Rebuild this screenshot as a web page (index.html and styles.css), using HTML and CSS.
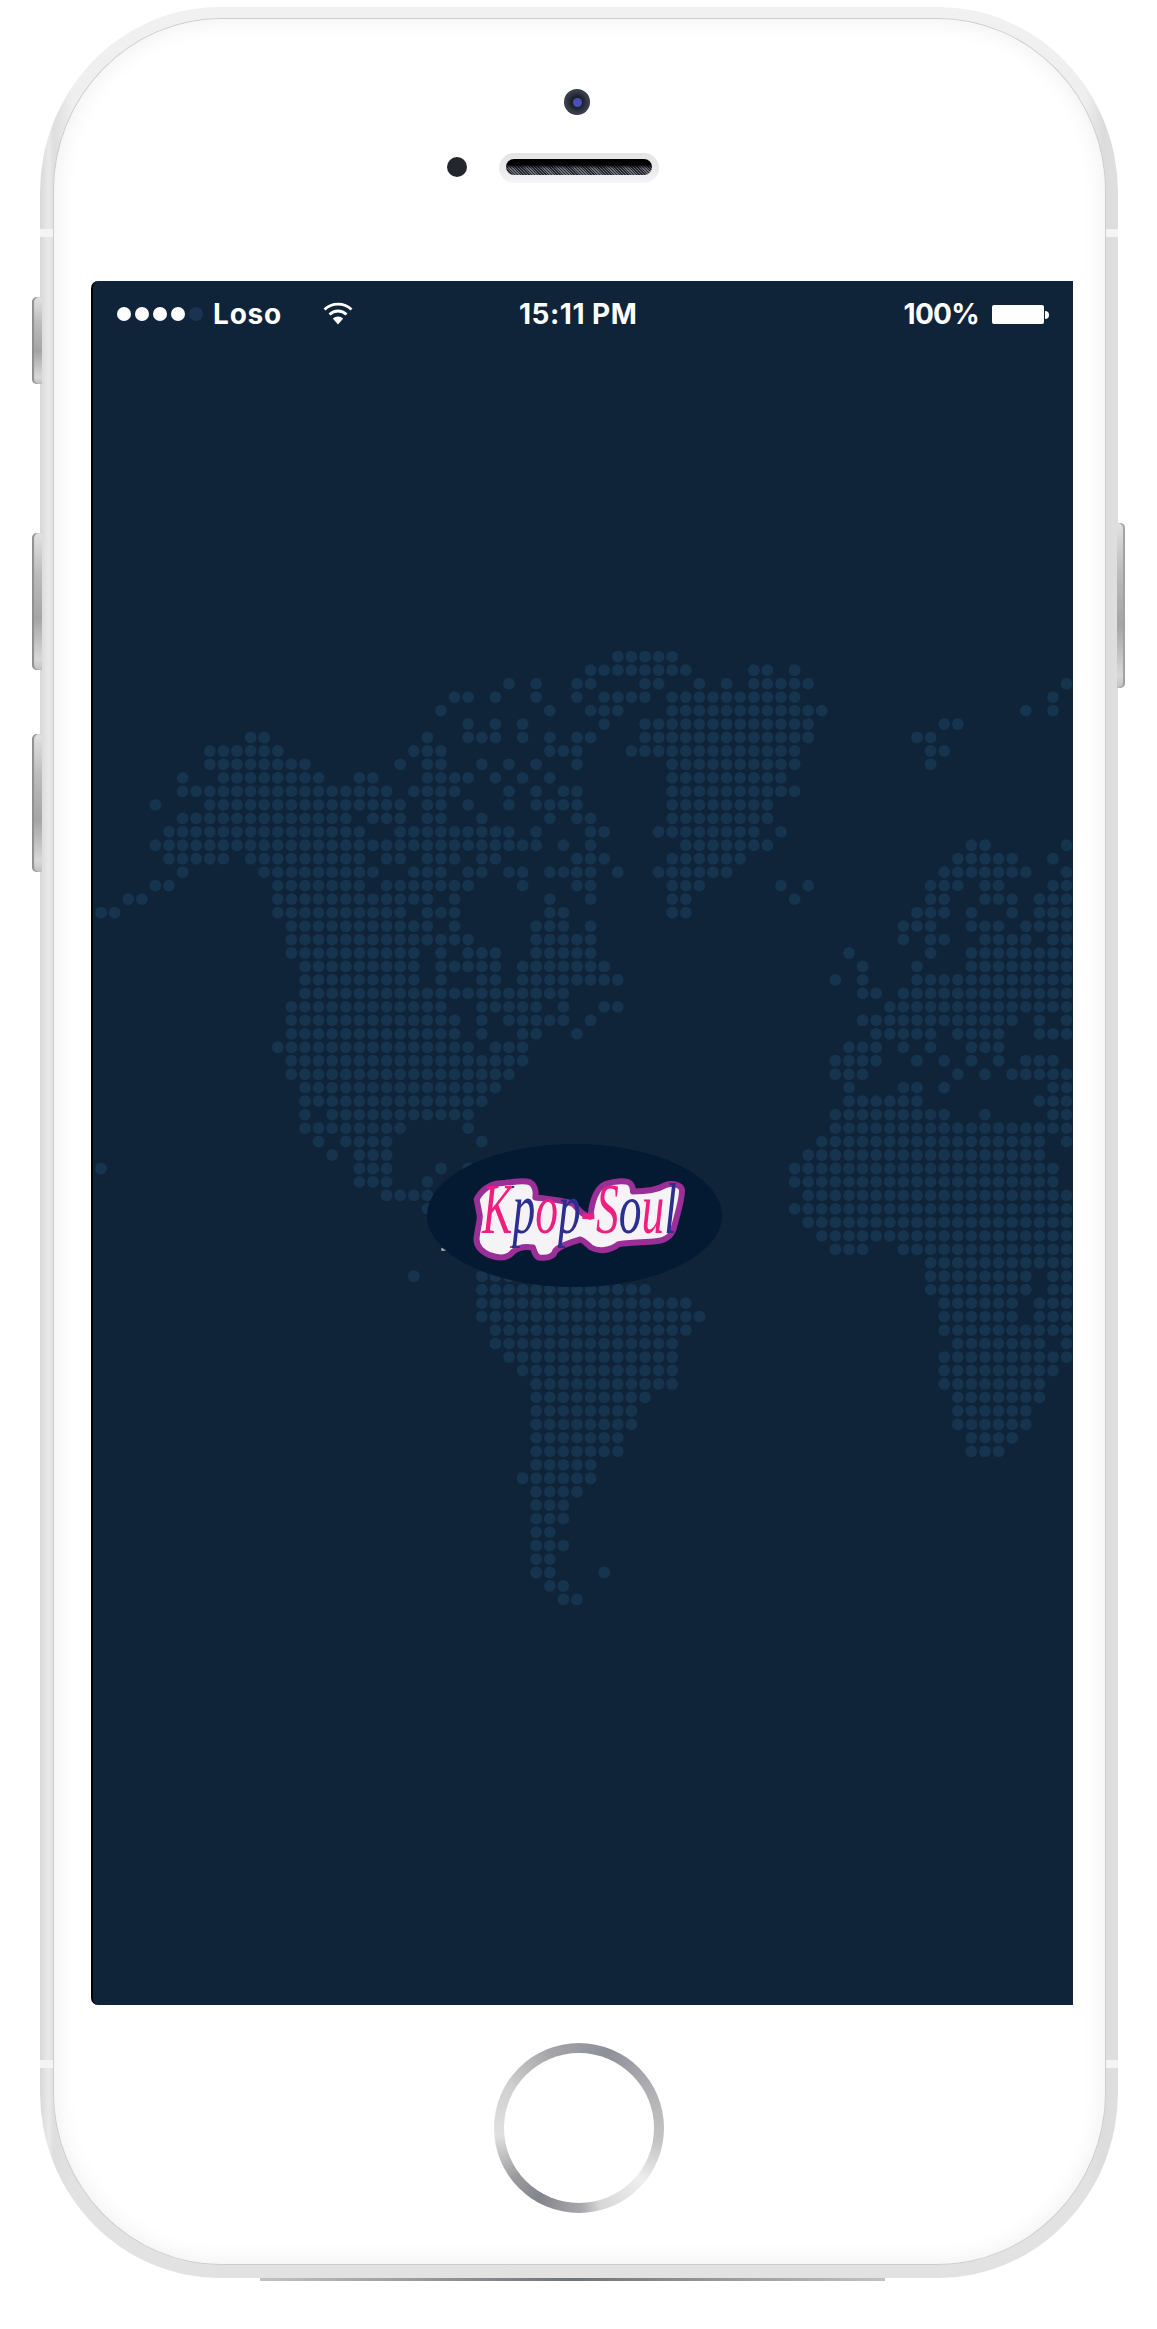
FILE: index.html
```html
<!DOCTYPE html>
<html lang="en">
<head>
    <meta charset="UTF-8">
    <meta name="viewport" content="width=device-width, initial-scale=1.0">
    <title>Kpop-Soul</title>
    <link rel="stylesheet" href="styles.css">
</head>
<body>

<div class="phone">
    <span class="side-btn side-btn-mute"></span>
    <span class="side-btn side-btn-up"></span>
    <span class="side-btn side-btn-down"></span>
    <span class="side-btn side-btn-power"></span>
    <span class="band band-top-left"></span>
    <span class="band band-top-right"></span>
    <span class="band band-bottom-left"></span>
    <span class="band band-bottom-right"></span>

    <div class="bezel">
        <div class="sensors">
            <div class="camera"><span class="lens"></span></div>
            <div class="earpiece-row">
                <span class="prox"></span>
                <div class="speaker"><span class="grille"></span></div>
            </div>
        </div>

        <div class="screen">
            <!-- dots get added by map.js -->
            <svg id="world-map" class="world-map" width="980" height="1724"></svg>

            <div class="status-bar">
                <div class="status-left">
                    <span class="signal">
                        <i></i><i></i><i></i><i></i><i class="off"></i>
                    </span>
                    <span class="carrier">Loso</span>
                    <svg class="wifi" width="30" height="24" viewBox="0 0 30 24">
                        <path class="wifi-arc" d="M1.5 8.5C9 1.2 21 1.2 28.5 8.5"/>
                        <path class="wifi-arc" d="M6.5 13.5C11.5 8.8 18.5 8.8 23.5 13.5"/>
                        <path class="wifi-dot" d="M9.8 17.6C13 14.9 17 14.9 20.2 17.6L15 23.5Z"/>
                    </svg>
                </div>
                <span class="clock">15:11 PM</span>
                <div class="status-right">
                    <span class="percent">100%</span>
                    <span class="battery"></span>
                </div>
            </div>

            <div class="logo-oval">
                <svg class="logo" width="295" height="143" viewBox="80 72 885 428">
                    <defs>
                        <!-- hard stops, one colour per letter -->
                        <linearGradient id="logo-ink" gradientUnits="userSpaceOnUse" x1="0" y1="0" x2="920" y2="0">
                            <stop offset="0.156" stop-color="#ee1f7e"/>
                            <stop offset="0.156" stop-color="#2c2f8f"/>
                            <stop offset="0.273" stop-color="#2c2f8f"/>
                            <stop offset="0.273" stop-color="#ee1f7e"/>
                            <stop offset="0.39" stop-color="#ee1f7e"/>
                            <stop offset="0.39" stop-color="#2c2f8f"/>
                            <stop offset="0.507" stop-color="#2c2f8f"/>
                            <stop offset="0.507" stop-color="#ee1f7e"/>
                            <stop offset="0.702" stop-color="#ee1f7e"/>
                            <stop offset="0.702" stop-color="#2c2f8f"/>
                            <stop offset="0.819" stop-color="#2c2f8f"/>
                            <stop offset="0.819" stop-color="#ee1f7e"/>
                            <stop offset="0.935" stop-color="#ee1f7e"/>
                            <stop offset="0.935" stop-color="#2c2f8f"/>
                        </linearGradient>
                    </defs>
                    <path class="logo-sticker" d="M229 238C240 212 270 190 300 189C330 188 365 178 388 186C404 194 408 215 405 232C440 236 490 240 520 252C535 268 545 285 570 290C574 250 585 205 615 192C645 182 680 180 690 190C698 198 698 208 698 214C725 214 770 210 795 195C815 188 843 192 845 210C846 240 830 285 820 325C812 350 795 362 760 364C725 366 690 366 655 372C630 392 595 395 572 382C560 372 552 362 540 358C515 365 480 375 465 392C460 412 440 415 415 412C402 405 402 392 398 382C375 378 355 380 338 395C322 415 295 415 268 405C245 395 225 380 229 350C232 325 240 300 238 285Z"/>
                    <path class="logo-speck" d="M123 384h6v4h6v4h-12z"/>
                    <text class="logo-type" transform="translate(245 338) scale(0.636 1)">Kpop-Soul</text>
                </svg>
            </div>
        </div>

        <div class="home-btn"><span class="home-face"></span></div>
    </div>
</div>

<script src="map.js"></script>

</body>
</html>
```

FILE: styles.css
```css
html, body {
    margin: 0;
    padding: 0;
    background: #fff;
}
body {
    width: 1157px;
    height: 2329px;
    overflow: hidden;
    font-family: Inter, "Liberation Sans", sans-serif;
}

/* device */
.phone {
    position: relative;
    box-sizing: border-box;
    width: 1078px;
    height: 2271px;
    margin: 7px 0 0 40px;
    padding: 12px 13px 14px 14px;
    border-radius: 180px / 186px;
    background:
        linear-gradient(90deg, #d8d8d8 0, #e9e9e9 0.8%, #dedede 1.3%, rgba(230, 230, 230, 0) 3%, rgba(230, 230, 230, 0) 97%, #dcdcdc 98.6%, #dfdfdf 100%),
        linear-gradient(180deg, #f1f1f1 0, #e9e9e9 12%, #e2e2e2 100%);
}
.phone::after {
    content: "";
    position: absolute;
    left: 220px;
    right: 233px;
    bottom: -3px;
    height: 3px;
    background: linear-gradient(90deg, #c0c3c6, #6f7478 50%, #c0c3c6);
}
.side-btn {
    position: absolute;
    width: 10px;
    background: linear-gradient(180deg, #e2e2e2 0, #bcbcbc 30%, #a5a5a5 62%, #d8d8d8 92%, #c2c2c2 100%);
}
.side-btn-mute, .side-btn-up, .side-btn-down {
    left: -8px;
    border-radius: 5px 0 0 5px;
    box-shadow: inset 2px 0 1px #8f8f8f;
}
.side-btn-mute { top: 290px; height: 87px; }
.side-btn-up { top: 526px; height: 137px; }
.side-btn-down { top: 727px; height: 138px; }
.side-btn-power {
    top: 516px;
    right: -7px;
    width: 8px;
    height: 165px;
    border-radius: 0 5px 5px 0;
    box-shadow: inset -2px 0 1px #a0a0a0;
}
.band {
    position: absolute;
    width: 14px;
    height: 8px;
    background: #f4f4f4;
}
.band-top-left { top: 222px; left: 0; }
.band-top-right { top: 222px; right: 0; }
.band-bottom-left { top: 2053px; left: 0; }
.band-bottom-right { top: 2053px; right: 0; }

.bezel {
    position: relative;
    height: 100%;
    border-radius: 168px / 172px;
    background: #fff;
    box-shadow: 0 0 0 1px #cdcdcd, inset 0 0 24px #eeeeee;
}

/* top of the device */
.sensors {
    box-sizing: border-box;
    height: 262px;
    padding-top: 70px;
}
.camera {
    display: flex;
    align-items: center;
    justify-content: center;
    width: 26px;
    height: 26px;
    margin-left: 510px;
    border-radius: 50%;
    background: radial-gradient(circle, #1c2130 30%, #3b3f4a 62%, #1b1d24 100%);
}
.lens {
    width: 9px;
    height: 9px;
    border-radius: 50%;
    background: #4b50b4;
}
.earpiece-row {
    display: flex;
    align-items: center;
    gap: 32px;
    margin: 38px 0 0 393px;
}
.prox {
    width: 20px;
    height: 20px;
    margin-top: -2px;
    border-radius: 50%;
    background: #24262e;
}
.speaker {
    box-sizing: border-box;
    width: 160px;
    height: 30px;
    padding: 6px 7px;
    border-radius: 15px;
    background: linear-gradient(180deg, #e4e4e6 0, #ebebed 60%, #f6f6f8 100%);
}
.grille {
    display: block;
    height: 16px;
    border-radius: 8px;
    background:
        linear-gradient(180deg, #000 0, #000 35%, rgba(0, 0, 0, 0) 60%),
        repeating-linear-gradient(45deg, #25252c 0, #25252c 1px, #70707c 1px, #70707c 2px);
}

/* screen */
.screen {
    position: relative;
    box-sizing: border-box;
    width: 982px;
    height: 1724px;
    margin-left: 37px;
    overflow: hidden;
    border-left: 2px solid #000;
    border-radius: 7px 0 0 7px;
    background: #102439;
}
.world-map {
    position: absolute;
    top: 0;
    left: 0;
}
.world-map circle {
    fill: #17344f;
}
.status-bar {
    position: relative;
    display: flex;
    align-items: center;
    box-sizing: border-box;
    height: 66px;
    padding: 0 24px;
    color: #fff;
    font-size: 28px;
    font-weight: 700;
}
.status-left {
    display: flex;
    align-items: center;
    width: 402px;
}
.signal {
    display: flex;
    gap: 4px;
}
.signal i {
    width: 14px;
    height: 14px;
    border-radius: 50%;
    background: #fff;
}
.signal i.off {
    background: #1a3350;
}
.carrier {
    margin-left: 10px;
    letter-spacing: 0.8px;
}
.wifi {
    margin: -3px 0 0 41px;
}
.wifi-arc {
    fill: none;
    stroke: #fff;
    stroke-width: 2.8;
}
.wifi-dot {
    fill: #fff;
}
.clock {
    letter-spacing: 0.5px;
}
.percent {
    letter-spacing: -0.7px;
}
.status-right {
    display: flex;
    align-items: center;
    gap: 13px;
    margin-left: auto;
}
.battery {
    position: relative;
    width: 52px;
    height: 19px;
    margin-right: 5px;
    border-radius: 2px;
    background: #fff;
}
.battery::after {
    content: "";
    position: absolute;
    top: 6px;
    right: -5px;
    width: 4px;
    height: 8px;
    border-radius: 0 4px 4px 0;
    background: #fff;
}

/* logo */
.logo-oval {
    position: absolute;
    top: 863px;
    left: 334px;
    width: 295px;
    height: 143px;
    border-radius: 50%;
    background: #041a32;
}
.logo {
    display: block;
    overflow: visible;
}
.logo-sticker {
    fill: #f5f3f6;
    stroke: #9b2f98;
    stroke-width: 18;
    stroke-linejoin: round;
}
.logo-speck {
    fill: #b8bcc0;
}
.logo-type {
    font-family: "Liberation Serif", serif;
    font-size: 215px;
    font-style: italic;
    fill: url(#logo-ink);
}

/* home button */
.home-btn {
    box-sizing: border-box;
    width: 170px;
    height: 170px;
    margin: 38px 0 0 440px;
    padding: 10px;
    border-radius: 50%;
    background: conic-gradient(#9a9aa2 0deg, #8f8f98 20deg, #b5b5b8 70deg, #c4c4c4 100deg, #efefef 130deg, #d6d6d6 165deg, #a8a8ac 178deg, #84848c 210deg, #9a9a9e 232deg, #e0e0e0 265deg, #d0d0d0 300deg, #a4a4a8 340deg, #9a9aa2 360deg);
}
.home-face {
    display: block;
    height: 100%;
    border-radius: 50%;
    background: #fff;
}
```

FILE: map.js
```js
// one entry per row of dots, each number or range is a column
const rows = [
    '38-42',
    '36-43 48 49 51',
    '30 32 35 36 40 41 44 46 48-52 71',
    '26 27 29 32 35 37-40 42-51 70',
    '25 33 36-38 42-53 68 70',
    '27 29 31 37 40-52 62 63',
    '11 12 24 27-29 31 33 35 36 40-52 60 61',
    '8-13 23-25 33-35 39-51 61 62',
    '8-15 22 24 25 28 30 32 35 42-51 61',
    '6 9-16 19 20 24-27 29 31 33 42-50',
    '6-21 23-26 30 32 34 35 42-51',
    '4 8-22 24 25 27 30 32-35 42-49',
    '6-18 20-22 24 25 28 33 35 36 42-49',
    '5-19 22-30 32 36 37 41-48 50',
    '4-32 34 36 43-49 64 65 71',
    '5-9 11-19 21 22 24-26 28 29 35-37 42-47 63-67 70',
    '6 12-20 23-25 27 28 30 31 33-36 38 41-46 62-68 71',
    '4 5 13-19 21-27 31 35 36 42-44 50 52 61-63 65 66 70 71',
    '2 3 13-24 26 33 36 42 43 51 61 62 65-67 69-71',
    '0 1 13-22 24-26 33 34 42 43 60-62 64 67 69-71',
    '14-24 26 32-34 36 59-61 64-66 68-71',
    '14-27 32-36 59 61 62 65-68 70 71',
    '14-23 25 27-29 32-36 55 61 64-71',
    '15-23 25-29 31-37 56 60 64-71',
    '15-23 25 28 29 31-38 54 56 60-71',
    '15-34 56 57 59-71',
    '14-25 28-32 34 37 38 58-71',
    '14-26 28 30-34 36 56-67 69 71',
    '14-26 28 31 32 35 57-61 63-66 69-71',
    '13-27 29-31 55-57 59 61 64-66',
    '14-31 54-57 60 62 64 66 68-70',
    '14-30 54-56 63 65 67-71',
    '15-29 55 59 60 62 70 71',
    '15-28 55-60 69-71',
    '15 17-27 54-62 65 70 71',
    '15-22 27 54-71',
    '16 18-21 28 53-69 71',
    '17 19-21 52-69',
    '0 19-21 25 27 51-70',
    '19-21 24 51-70',
    '21-24 52-71',
    '24 51-71',
    '52-71',
    '53-71',
    '54-56 59-71',
    '61-71',
    '23 28-37 61-68 70 71',
    '28-40 61-68 70 71',
    '28-43 62-67 69-71',
    '28-44 62-67 69-71',
    '29-43 62-71',
    '29-42 63-69 71',
    '30-42 62-71',
    '31-42 62-70',
    '32-42 62-69',
    '32-40 63-69',
    '32-39 63-68',
    '32-39 63-68',
    '32-38 64-67',
    '32-38 64-66',
    '32-36',
    '31-36',
    '32-35',
    '32-34',
    '32-34',
    '32 33',
    '32-34',
    '32 33',
    '32 33 37',
    '33 34',
    '34 35'
];

const map = document.getElementById('world-map');

rows.forEach((row, r) => {
    row.split(' ').forEach(part => {
        const [from, to] = part.split('-').map(Number);
        for (let c = from; c <= (to === undefined ? from : to); c++) {
            const dot = document.createElementNS('http://www.w3.org/2000/svg', 'circle');
            dot.setAttribute('cx', 8 + c * 13.6);
            dot.setAttribute('cy', 375.7 + r * 13.468);
            dot.setAttribute('r', 5.9);
            map.appendChild(dot);
        }
    });
});
```
